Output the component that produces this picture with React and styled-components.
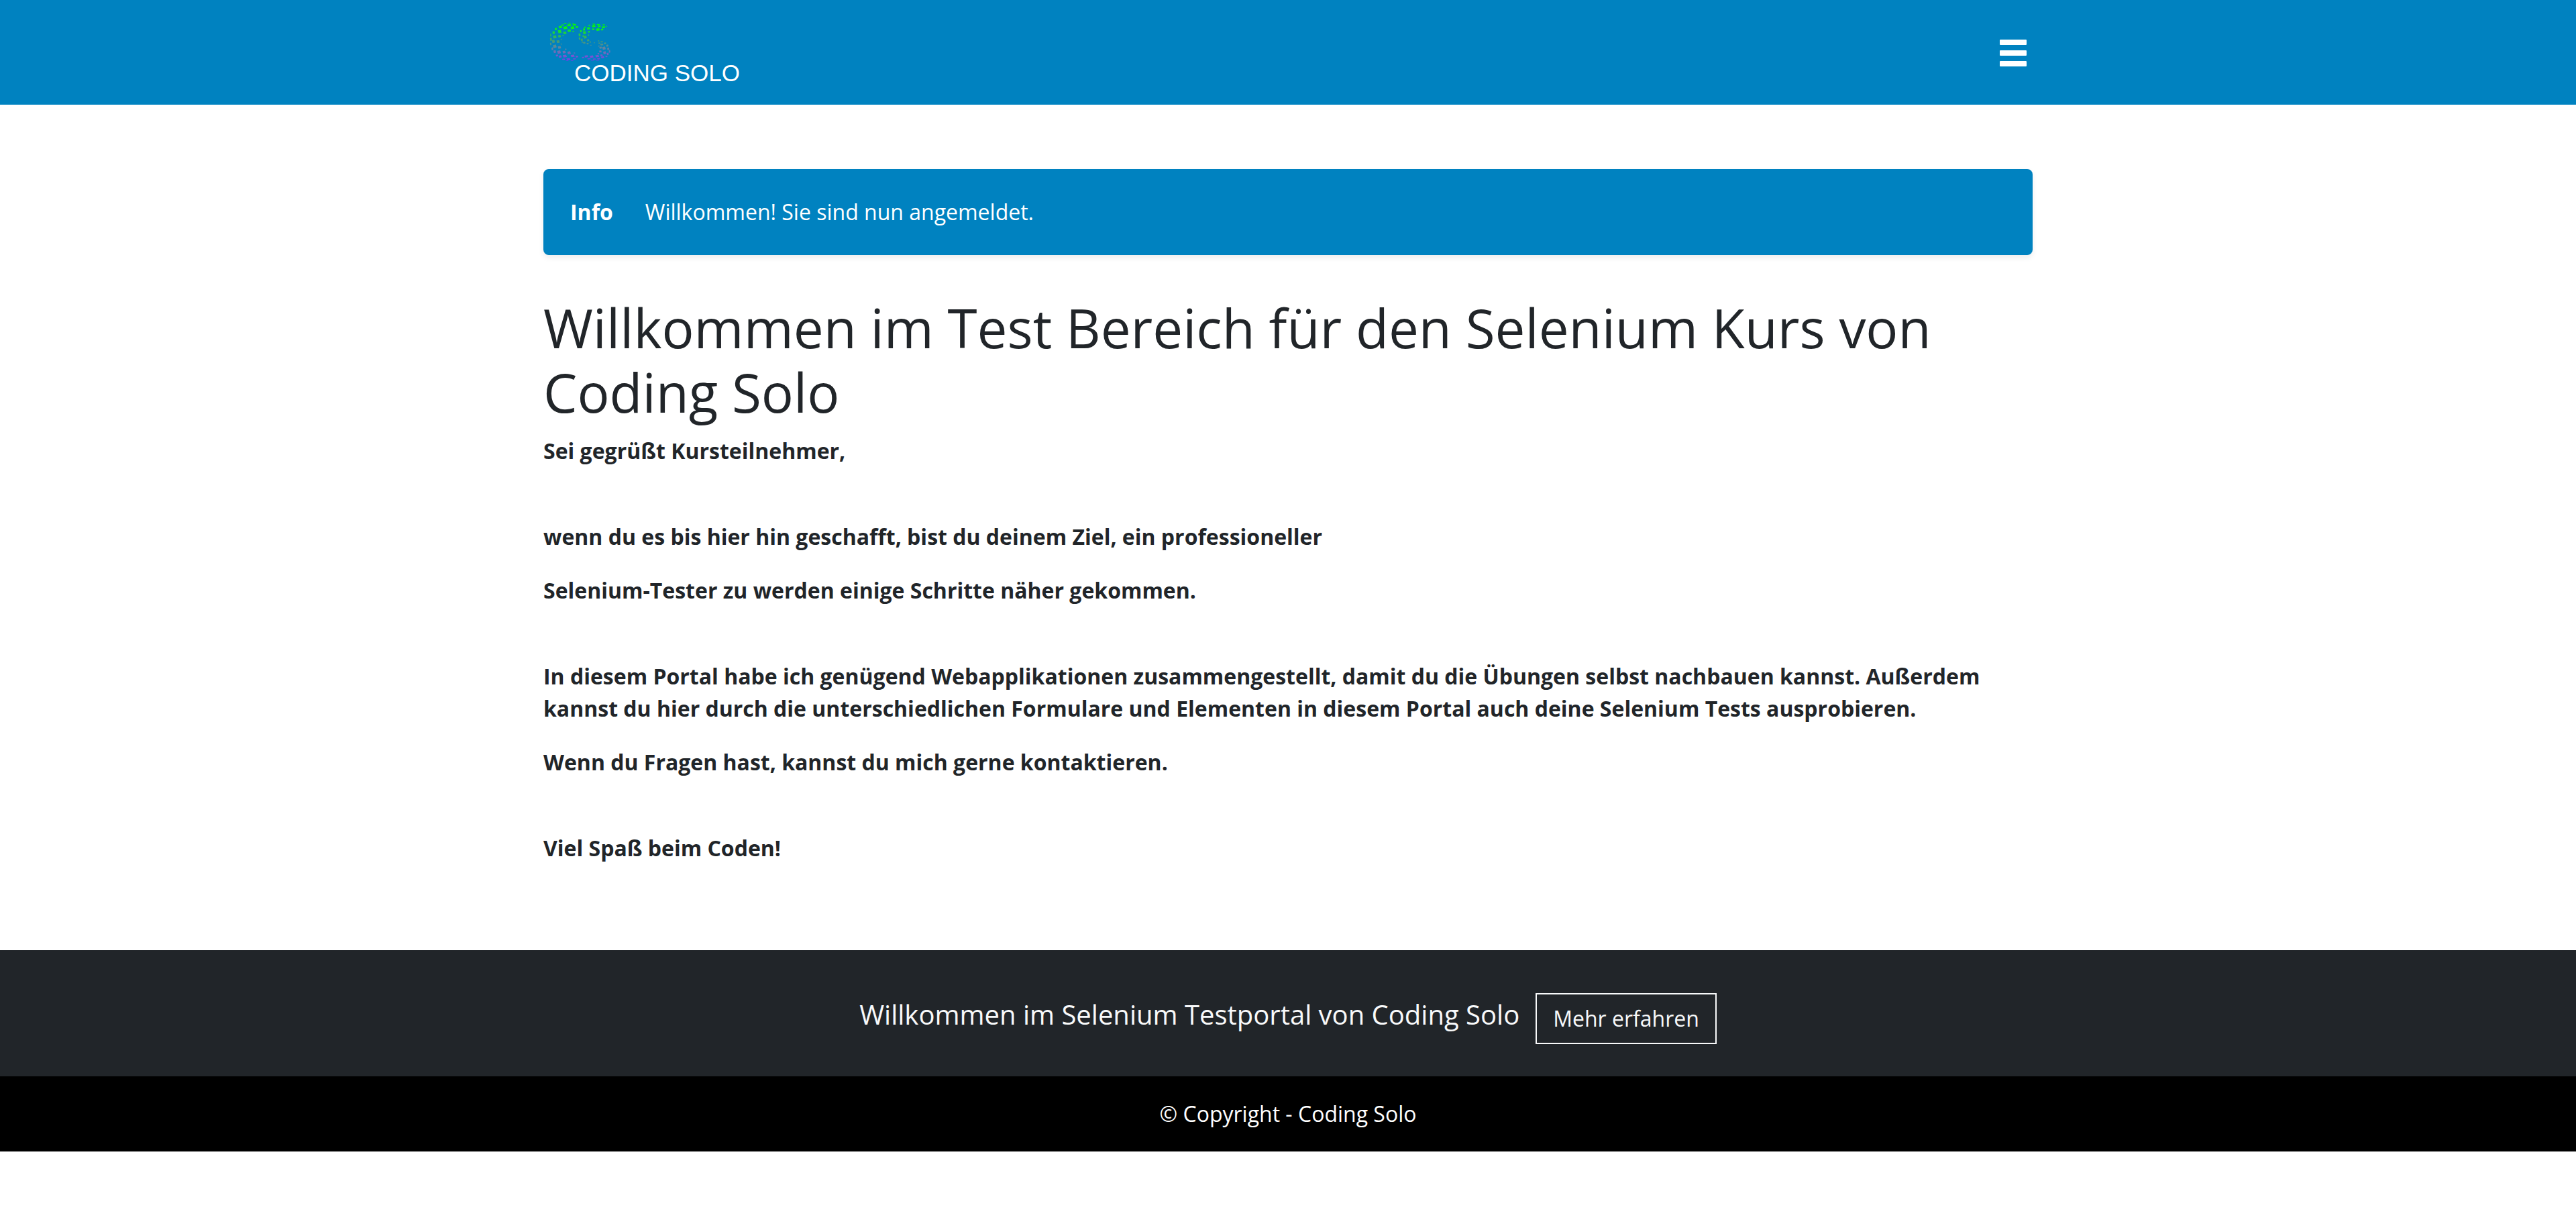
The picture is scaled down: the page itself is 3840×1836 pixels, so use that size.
import React from "react";
import styled, { createGlobalStyle } from "styled-components";

const GlobalStyle = createGlobalStyle`
  *, *::before, *::after { box-sizing: border-box; }
  body {
    margin: 0;
    background: #fff;
    color: #212529;
    font-family: "Open Sans", sans-serif;
    font-size: 32px;
    line-height: 48px;
  }
`;

const Container = styled.div`
  width: 100%;
  max-width: 2280px;
  margin: 0 auto;
  padding: 0 30px;
`;

const Header = styled.header`
  background: #0082c0;
  padding: 16px 0;
`;

const NavRow = styled(Container)`
  display: flex;
  align-items: center;
  justify-content: space-between;
`;

const Brand = styled.a`
  display: block;
  text-decoration: none;

  svg { display: block; }
  text {
    font-family: "Liberation Sans", Arial, sans-serif;
    font-size: 35px;
    fill: #fff;
  }
`;

const MenuButton = styled.button`
  display: block;
  padding: 0;
  border: 0;
  background: transparent;
  color: #fff;
  cursor: pointer;

  svg { display: block; }
`;

const Main = styled(Container).attrs({ as: "main" })`
  padding-top: 96px;
  padding-bottom: 96px;
`;

const Alert = styled.div`
  display: flex;
  gap: 48px;
  padding: 40px;
  margin-bottom: 60px;
  border-radius: 8px;
  background: #0082c0;
  color: #fff;
  box-shadow: 0 4px 8px rgba(0, 0, 0, 0.075);
`;

const Title = styled.h1`
  margin: 0 0 16px;
  font-size: 80px;
  font-weight: 400;
  line-height: 96px;
`;

const Paragraph = styled.p`
  margin: 0 0 32px;
  padding-top: ${(p) => (p.$spaced ? "48px" : "0")};
  font-weight: 700;
`;

const CallToAction = styled.section`
  display: flex;
  flex-wrap: wrap;
  align-items: flex-start;
  justify-content: center;
  gap: 24px;
  padding: 64px 30px 48px;
  background: #212529;
  color: #f8f9fa;
`;

const Lead = styled.span`
  font-size: 40px;
  line-height: 64px;
`;

const OutlineButton = styled.button`
  padding: 12px 24px;
  border: 2px solid #f8f9fa;
  background: transparent;
  color: #f8f9fa;
  font: inherit;
  cursor: pointer;
`;

const Copyright = styled.div`
  padding: 32px 30px;
  background: #000;
  color: #fff;
  text-align: center;
`;

/* Mosaic tiles of the two letters: centre x, centre y, width, height. */
const C_TILES = [
  [80, 15, 14, 4], [98, 13, 14, 3], [116, 15, 12, 3],
  [68, 22, 12, 6], [97, 23, 20, 10], [121, 21, 18, 7], [132, 31, 14, 9],
  [58, 31, 16, 12], [80, 34, 20, 14], [112, 34, 18, 14], [98, 47, 17, 13],
  [38, 40, 10, 12], [55, 51, 17, 17], [78, 57, 16, 12], [116, 50, 9, 6],
  [28, 56, 12, 14], [33, 75, 17, 15], [54, 72, 14, 12], [70, 69, 7, 6],
  [15, 67, 5, 15], [16, 86, 9, 16], [27, 95, 14, 16], [48, 96, 15, 14],
  [62, 86, 6, 5], [15, 106, 7, 13], [33, 117, 17, 16], [54, 122, 15, 13],
  [62, 107, 6, 5], [22, 128, 8, 14], [33, 141, 12, 14], [52, 143, 17, 16],
  [75, 143, 15, 13], [97, 146, 16, 14], [82, 130, 8, 5], [43, 158, 12, 9],
  [57, 163, 14, 12], [78, 161, 19, 13], [113, 160, 18, 12], [132, 163, 12, 8],
  [72, 175, 14, 6], [94, 174, 18, 9], [121, 173, 14, 6], [88, 181, 14, 3],
  [110, 181, 14, 3], [121, 147, 8, 5],
];

const S_TILES = [
  [56, 23, 10, 6], [76, 18, 14, 5], [96, 19, 16, 4], [120, 21, 12, 4], [131, 28, 6, 5],
  [75, 27, 18, 10], [99, 27, 16, 9], [119, 32, 16, 10],
  [52, 37, 16, 12], [36, 32, 10, 7], [94, 42, 18, 13], [113, 42, 12, 9], [73, 41, 12, 8],
  [32, 42, 10, 12], [34, 56, 15, 15], [54, 52, 9, 9], [18, 49, 9, 11],
  [12, 66, 10, 15], [37, 76, 15, 14], [28, 71, 7, 9], [52, 67, 6, 6], [12, 82, 8, 11],
  [22, 88, 10, 12], [50, 90, 11, 10], [33, 101, 12, 9], [48, 105, 10, 7],
  [60, 98, 7, 6], [62, 112, 8, 3], [78, 101, 5, 5], [24, 98, 7, 7],
  [97, 93, 8, 4], [111, 97, 12, 6], [100, 103, 9, 6], [111, 109, 15, 9], [126, 104, 11, 8],
  [98, 116, 7, 5], [106, 123, 12, 11], [121, 125, 16, 15], [136, 114, 10, 11],
  [140, 128, 10, 12], [146, 140, 7, 13], [124, 146, 14, 14], [105, 140, 12, 10],
  [138, 151, 9, 12], [96, 150, 9, 6], [110, 157, 12, 8], [91, 161, 17, 11],
  [115, 166, 16, 9], [132, 163, 10, 6], [97, 173, 14, 7], [66, 163, 18, 11],
  [42, 162, 17, 10], [54, 173, 16, 7], [78, 174, 14, 6], [28, 167, 12, 6],
  [70, 180, 18, 3], [92, 180, 16, 3],
];

const tilePath = ([x, y, w, h]) =>
  `M${x - w * 0.5} ${y - h * 0.3}L${x + w * 0.3} ${y - h * 0.5}L${x + w * 0.5} ${y + h * 0.3}L${x - w * 0.3} ${y + h * 0.5}Z`;

const Tiles = ({ tiles }) => <path d={tiles.map(tilePath).join("")} fill="url(#mosaic)" />;

const Logo = () => (
  <svg width="300" height="124" viewBox="0 0 300 124" role="img" aria-label="Coding Solo">
    <defs>
      <linearGradient id="mosaic" gradientUnits="userSpaceOnUse" x1="0" y1="12" x2="0" y2="184">
        <stop offset="0" stopColor="#00ff00" />
        <stop offset="0.18" stopColor="#0cec24" />
        <stop offset="0.45" stopColor="#40a070" />
        <stop offset="0.68" stopColor="#6480a8" />
        <stop offset="0.86" stopColor="#7656d0" />
        <stop offset="1" stopColor="#8030f0" />
      </linearGradient>
    </defs>
    <g transform="translate(6 14) scale(0.3333)">
      <Tiles tiles={C_TILES} />
      <g transform="translate(132 0)">
        <Tiles tiles={S_TILES} />
      </g>
    </g>
    <text x="46" y="105">CODING SOLO</text>
  </svg>
);

const MenuIcon = () => (
  <svg width="56" height="56" viewBox="0 0 56 56" fill="currentColor" aria-hidden="true">
    <rect x="7" y="9" width="40" height="8" rx="1" />
    <rect x="7" y="25" width="40" height="8" rx="1" />
    <rect x="7" y="41" width="40" height="8" rx="1" />
  </svg>
);

export default function App() {
  return (
    <>
      <GlobalStyle />
      <Header>
        <NavRow as="nav">
          <Brand href="#">
            <Logo />
          </Brand>
          <MenuButton type="button" aria-label="Menü">
            <MenuIcon />
          </MenuButton>
        </NavRow>
      </Header>
      <Main>
        <Alert role="status">
          <strong>Info</strong>
          <span>Willkommen! Sie sind nun angemeldet.</span>
        </Alert>
        <Title>Willkommen im Test Bereich für den Selenium Kurs von Coding Solo</Title>
        <Paragraph>Sei gegrüßt Kursteilnehmer,</Paragraph>
        <Paragraph $spaced>wenn du es bis hier hin geschafft, bist du deinem Ziel, ein professioneller</Paragraph>
        <Paragraph>Selenium-Tester zu werden einige Schritte näher gekommen.</Paragraph>
        <Paragraph $spaced>
          In diesem Portal habe ich genügend Webapplikationen zusammengestellt, damit du die Übungen selbst
          nachbauen kannst. Außerdem kannst du hier durch die unterschiedlichen Formulare und Elementen in
          diesem Portal auch deine Selenium Tests ausprobieren.
        </Paragraph>
        <Paragraph>Wenn du Fragen hast, kannst du mich gerne kontaktieren.</Paragraph>
        <Paragraph $spaced>Viel Spaß beim Coden!</Paragraph>
      </Main>
      <footer>
        <CallToAction>
          <Lead>Willkommen im Selenium Testportal von Coding Solo</Lead>
          <OutlineButton type="button">Mehr erfahren</OutlineButton>
        </CallToAction>
        <Copyright>© Copyright - Coding Solo</Copyright>
      </footer>
    </>
  );
}
